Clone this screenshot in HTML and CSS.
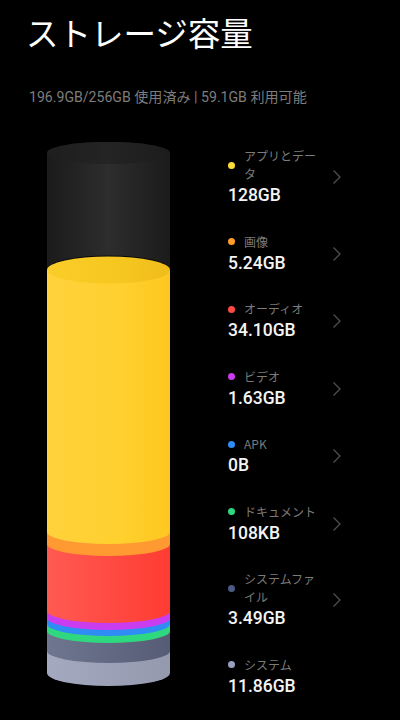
FILE: index.html
```html
<!DOCTYPE html>
<html lang="ja">
<head>
<meta charset="utf-8">
<title>ストレージ容量</title>
<link rel="stylesheet" href="styles.css">
</head>
<body>
<main class="page">
  <h1 class="title">ストレージ容量</h1>
  <p class="summary">196.9GB/256GB 使用済み | 59.1GB 利用可能</p>
  <div class="content">
    <svg class="tube" width="200" height="590" viewBox="0 130 200 590" aria-hidden="true">
      <defs>
        <linearGradient id="gEmpty" x1="0" x2="1" y1="0" y2="0"><stop offset="0" stop-color="#1b1b1b"/><stop offset=".5" stop-color="#2d2d2d"/><stop offset="1" stop-color="#1b1b1b"/></linearGradient>
        <linearGradient id="gEmptyTop" x1="0" x2="1" y1="0" y2="0"><stop offset="0" stop-color="#1e1e1e"/><stop offset=".5" stop-color="#242424"/><stop offset="1" stop-color="#1c1c1c"/></linearGradient>
        <linearGradient id="gYellow" x1="0" x2="1" y1="0" y2="0"><stop offset="0" stop-color="#ffd23c"/><stop offset=".6" stop-color="#ffd02e"/><stop offset="1" stop-color="#fdc71f"/></linearGradient>
        <linearGradient id="gYellowTop" x1="0" x2="1" y1="0" y2="0"><stop offset="0" stop-color="#fbcd28"/><stop offset=".5" stop-color="#f7c822"/><stop offset="1" stop-color="#efbd1a"/></linearGradient>
        <linearGradient id="gRed" x1="0" x2="1" y1="0" y2="0"><stop offset="0" stop-color="#ff5a52"/><stop offset="1" stop-color="#ff3c33"/></linearGradient>
        <linearGradient id="gSlate" x1="0" x2="1" y1="0" y2="0"><stop offset="0" stop-color="#6f7690"/><stop offset="1" stop-color="#565c75"/></linearGradient>
        <linearGradient id="gLight" x1="0" x2="1" y1="0" y2="0"><stop offset="0" stop-color="#a5a9c0"/><stop offset="1" stop-color="#9599ae"/></linearGradient>
      </defs>
      <path d="M47 153V300H170V153A61.500 11 0 0 0 47 153Z" fill="url(#gEmpty)"/>
      <ellipse cx="108.500" cy="153" rx="61.500" ry="11" fill="url(#gEmptyTop)"/>
      <ellipse cx="108.500" cy="269.500" rx="61.500" ry="14" fill="#0a0a0a"/>
      <path d="M47 270V673A61.500 13 0 0 0 170 673V270Z" fill="url(#gLight)"/>
      <path d="M47 270V651A61.500 12 0 0 0 170 651V270Z" fill="url(#gSlate)"/>
      <path d="M47 270V631A61.500 12 0 0 0 170 631V270Z" fill="#2fd87f"/>
      <path d="M47 270V624A61.500 12 0 0 0 170 624V270Z" fill="#2f8cf5"/>
      <path d="M47 270V618A61.500 12 0 0 0 170 618V270Z" fill="#c93cf0"/>
      <path d="M47 270V611A61.500 12 0 0 0 170 611V270Z" fill="url(#gRed)"/>
      <path d="M47 270V544A61.500 12 0 0 0 170 544V270Z" fill="#ff9a33"/>
      <path d="M47 270V532A61.500 12 0 0 0 170 532V270Z" fill="url(#gYellow)"/>
      <ellipse cx="108.500" cy="270" rx="61.500" ry="13.500" fill="url(#gYellowTop)"/>
    </svg>
    <ul class="legend">
      <li class="item">
        <div class="info">
          <div class="label"><span class="dot dot-yellow"></span><span class="name">アプリとデータ</span></div>
          <div class="value">128GB</div>
        </div>
        <svg class="chevron" width="10" height="16" viewBox="0 0 10 16" aria-hidden="true"><path d="M1.500 1.500L8 8L1.500 14.500"/></svg>
      </li>
      <li class="item">
        <div class="info">
          <div class="label"><span class="dot dot-orange"></span><span class="name">画像</span></div>
          <div class="value">5.24GB</div>
        </div>
        <svg class="chevron" width="10" height="16" viewBox="0 0 10 16" aria-hidden="true"><path d="M1.500 1.500L8 8L1.500 14.500"/></svg>
      </li>
      <li class="item">
        <div class="info">
          <div class="label"><span class="dot dot-red"></span><span class="name">オーディオ</span></div>
          <div class="value">34.10GB</div>
        </div>
        <svg class="chevron" width="10" height="16" viewBox="0 0 10 16" aria-hidden="true"><path d="M1.500 1.500L8 8L1.500 14.500"/></svg>
      </li>
      <li class="item">
        <div class="info">
          <div class="label"><span class="dot dot-purple"></span><span class="name">ビデオ</span></div>
          <div class="value">1.63GB</div>
        </div>
        <svg class="chevron" width="10" height="16" viewBox="0 0 10 16" aria-hidden="true"><path d="M1.500 1.500L8 8L1.500 14.500"/></svg>
      </li>
      <li class="item">
        <div class="info">
          <div class="label"><span class="dot dot-blue"></span><span class="name">APK</span></div>
          <div class="value">0B</div>
        </div>
        <svg class="chevron" width="10" height="16" viewBox="0 0 10 16" aria-hidden="true"><path d="M1.500 1.500L8 8L1.500 14.500"/></svg>
      </li>
      <li class="item">
        <div class="info">
          <div class="label"><span class="dot dot-green"></span><span class="name">ドキュメント</span></div>
          <div class="value">108KB</div>
        </div>
        <svg class="chevron" width="10" height="16" viewBox="0 0 10 16" aria-hidden="true"><path d="M1.500 1.500L8 8L1.500 14.500"/></svg>
      </li>
      <li class="item">
        <div class="info">
          <div class="label"><span class="dot dot-slate"></span><span class="name">システムファイル</span></div>
          <div class="value">3.49GB</div>
        </div>
        <svg class="chevron" width="10" height="16" viewBox="0 0 10 16" aria-hidden="true"><path d="M1.500 1.500L8 8L1.500 14.500"/></svg>
      </li>
      <li class="item">
        <div class="info">
          <div class="label"><span class="dot dot-light"></span><span class="name">システム</span></div>
          <div class="value">11.86GB</div>
        </div>
      </li>
    </ul>
  </div>
</main>
</body>
</html>
```
FILE: styles.css
```css
* { box-sizing: border-box; }
html, body { margin: 0; padding: 0; background: #000; }
body { width: 400px; height: 720px; overflow: hidden; font-family: Roboto, "Noto Sans CJK JP", sans-serif; color: #fff; }
.page { padding-top: 10px; }
.title { margin: 0 0 0 26px; font-size: 32.500px; line-height: 44px; font-weight: 400; letter-spacing: 0; font-family: "Noto Sans CJK JP", sans-serif; }
.summary { margin: 34px 0 0 29px; font-size: 14.100px; line-height: 18px; color: #7d7d7d; }
.content { display: flex; margin-top: 24px; height: 590px; }
.tube { flex: none; display: block; width: 200px; height: 590px; }
.legend { list-style: none; margin: 17px 0 0 28px; padding: 0; width: 114px; display: flex; flex-direction: column; gap: 25.500px; }
.item { display: flex; align-items: center; justify-content: space-between; }
.info { width: 100px; }
.label { display: flex; align-items: center; font-size: 12px; line-height: 18px; color: #7b7b7b; }
.name { margin-left: 9px; width: 76px; font-family: "Noto Sans CJK JP", sans-serif; }
.value { font-size: 17.500px; line-height: 24px; font-weight: 500; color: #f4f4f4; }
.dot { flex: none; width: 7px; height: 7px; border-radius: 50%; }
.dot-yellow { background: #ffdc35; }
.dot-orange { background: #ff9c2e; }
.dot-red { background: #ff4a42; }
.dot-purple { background: #c93cf0; }
.dot-blue { background: #2f8cf5; }
.dot-green { background: #2fd87f; }
.dot-slate { background: #4c5a85; }
.dot-light { background: #9a9fc0; }
.chevron { flex: none; fill: none; stroke: #4e4e4e; stroke-width: 1.300; }
```
